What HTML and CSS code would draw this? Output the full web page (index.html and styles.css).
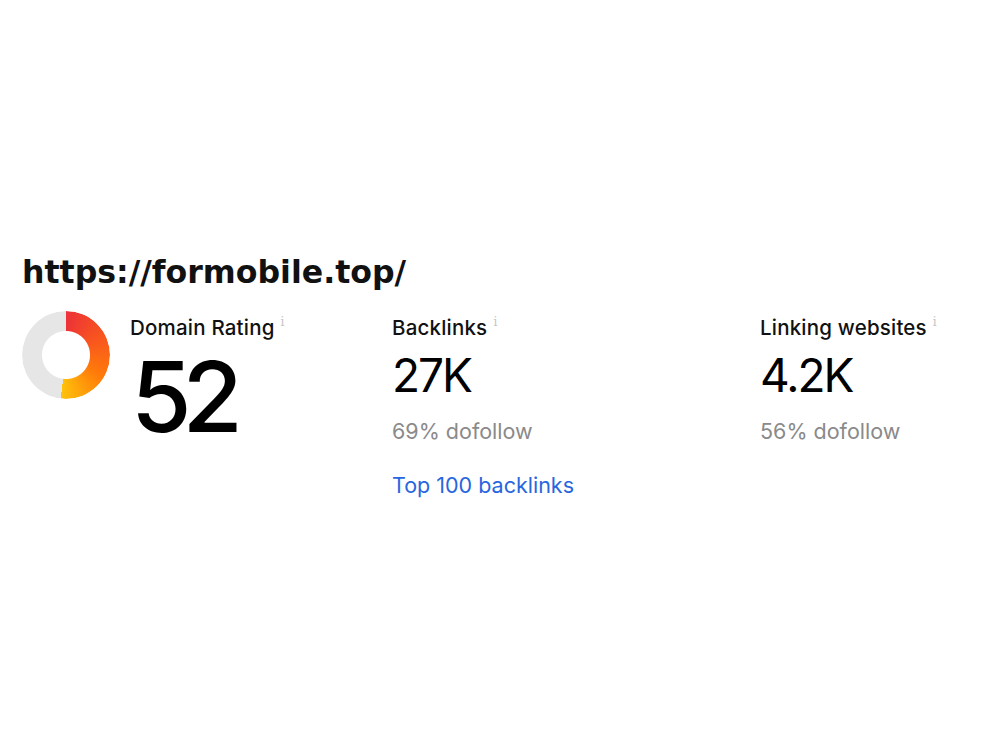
FILE: index.html
```html
<!DOCTYPE html>
<html lang="en">
<head>
<meta charset="utf-8">
<title>formobile.top</title>
<link rel="stylesheet" href="styles.css">
</head>
<body>
<main class="wrap">
  <h1 class="site">https://formobile.top/</h1>
  <section class="stats">
    <div class="stat stat-dr">
      <div class="donut"></div>
      <div class="dr-text">
        <div class="label">Domain Rating<span class="info">i</span></div>
        <div class="big">52</div>
      </div>
    </div>
    <div class="stat">
      <div class="label">Backlinks<span class="info">i</span></div>
      <div class="num">27K</div>
      <div class="sub">69% dofollow</div>
      <a class="link" href="#">Top 100 backlinks</a>
    </div>
    <div class="stat">
      <div class="label">Linking websites<span class="info">i</span></div>
      <div class="num">4.2K</div>
      <div class="sub">56% dofollow</div>
    </div>
  </section>
</main>
</body>
</html>
```

FILE: styles.css
```css
html, body {
  margin: 0;
  padding: 0;
  background: #ffffff;
}

.wrap {
  padding: 252px 0 0 22px;
  font-family: Inter, "Noto Sans", sans-serif;
  color: #111111;
}

.site {
  margin: 0;
  font-family: "DejaVu Sans", sans-serif;
  font-weight: bold;
  font-size: 31.6px;
  line-height: 40px;
  color: #111111;
}

.stats {
  display: grid;
  grid-template-columns: 370px 368px 1fr;
  margin-top: 19px;
}

.stat-dr {
  display: flex;
  gap: 20px;
  align-items: flex-start;
}

.donut {
  flex: none;
  width: 88px;
  height: 88px;
  border-radius: 50%;
  background: conic-gradient(from 0deg, #ec3238 0deg, #f8541f 60deg, #ff7a0a 120deg, #ffc20a 187deg, #e6e6e6 187deg, #e6e6e6 360deg);
  -webkit-mask: radial-gradient(circle at center, transparent 23.5px, #000 24.5px);
  mask: radial-gradient(circle at center, transparent 23.5px, #000 24.5px);
}

.label {
  font-size: 20.5px;
  line-height: 24px;
  font-weight: 500;
  letter-spacing: 0.2px;
  color: #111111;
  margin-top: 5px;
}

.info {
  display: inline-block;
  vertical-align: top;
  margin-left: 6px;
  font-family: "DejaVu Serif", serif;
  font-size: 12px;
  line-height: 12px;
  color: #c4c4c4;
}

.big {
  font-size: 98px;
  line-height: 80px;
  font-weight: 500;
  letter-spacing: -9px;
  margin-top: 17px;
  margin-left: 1px;
  color: #000000;
}

.num {
  font-size: 46px;
  line-height: 50px;
  font-weight: 400;
  letter-spacing: -2px;
  margin-top: 10px;
  color: #000000;
}

.sub {
  font-size: 21.5px;
  line-height: 28px;
  color: #8a8a8a;
  margin-top: 17px;
}

.link {
  display: block;
  margin-top: 26px;
  font-size: 21.5px;
  line-height: 28px;
  color: #2766e0;
  text-decoration: none;
}
```
